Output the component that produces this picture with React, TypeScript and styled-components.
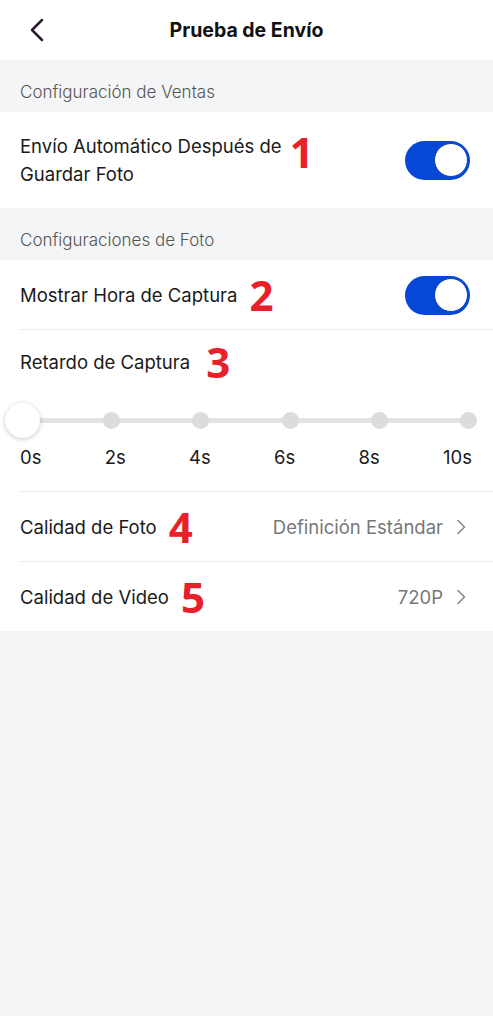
import React from "react";
import styled, { createGlobalStyle } from "styled-components";

const GlobalStyle = createGlobalStyle`
  html, body {
    margin: 0;
    padding: 0;
    background: #f4f5f7;
  }
  body {
    font-family: Inter, "Noto Sans", sans-serif;
    -webkit-font-smoothing: antialiased;
  }
`;

const Page = styled.div`
  width: 493px;
  min-height: 1016px;
  background: #f4f5f7;
  display: flex;
  flex-direction: column;
`;

const Header = styled.header`
  height: 60px;
  background: #fff;
  display: grid;
  grid-template-columns: 60px 1fr 60px;
  align-items: center;
`;

const BackButton = styled.button`
  border: none;
  background: none;
  padding: 0 0 0 30px;
  height: 60px;
  display: flex;
  align-items: center;
  cursor: pointer;
`;

const Title = styled.h1`
  margin: 0;
  text-align: center;
  font-size: 19.5px;
  font-weight: 700;
  color: #111;
`;

const SectionTitle = styled.div`
  height: 52px;
  box-sizing: border-box;
  padding: 0 20px 10px;
  display: flex;
  align-items: flex-end;
  font-size: 17px;
  font-weight: 300;
  color: #555;
`;

const Group = styled.section`
  background: #fff;
`;

const Row = styled.div<{ $h: number; $divider?: boolean; $pr?: number }>`
  height: ${(p) => p.$h}px;
  box-sizing: border-box;
  padding: 0 ${(p) => p.$pr ?? 23}px 0 20px;
  display: flex;
  align-items: center;
  position: relative;
  ${(p) =>
    p.$divider &&
    `
    &::after {
      content: "";
      position: absolute;
      left: 20px;
      right: 0;
      bottom: 0;
      height: 1px;
      background: #ececec;
    }
  `}
`;

const Label = styled.span`
  font-size: 18.5px;
  line-height: 28px;
  color: #1a1a1a;
`;

const Mark = styled.span<{ $top?: boolean; $gap?: number }>`
  font-family: "Open Sans", "Liberation Sans", sans-serif;
  font-weight: 700;
  font-size: 42px;
  line-height: 32px;
  color: #e8202a;
  margin-left: ${(p) => p.$gap ?? 12}px;
  ${(p) => p.$top && `align-self: flex-start; margin-top: 24px;`}
`;

const Spacer = styled.div`
  flex: 1;
`;

const Toggle = styled.div`
  width: 65px;
  height: 39px;
  border-radius: 20px;
  background: #0747d6;
  display: flex;
  justify-content: flex-end;
  align-items: center;
  padding: 0 2px;
  box-sizing: border-box;
`;

const Knob = styled.div`
  width: 34px;
  height: 34px;
  border-radius: 50%;
  background: #fff;
  border: 1.5px solid #0a3fc0;
  box-sizing: border-box;
`;

const DelayBlock = styled.div`
  position: relative;
  padding: 16px 0 24px;
  &::after {
    content: "";
    position: absolute;
    left: 20px;
    right: 0;
    bottom: 0;
    height: 1px;
    background: #ececec;
  }
`;

const DelayTitle = styled.div`
  padding: 0 20px;
  display: flex;
  align-items: center;
`;

const Track = styled.div`
  margin: 24px 6px 0 4px;
  height: 36px;
  display: flex;
  justify-content: space-between;
  align-items: center;
  position: relative;
  &::before {
    content: "";
    position: absolute;
    left: 18px;
    right: 18px;
    top: 16px;
    height: 5px;
    background: #e3e3e3;
    border-radius: 3px;
  }
`;

const Stop = styled.div`
  width: 36px;
  height: 36px;
  display: flex;
  justify-content: center;
  align-items: center;
  position: relative;
`;

const Dot = styled.div`
  width: 17px;
  height: 17px;
  border-radius: 50%;
  background: #dcdcdc;
`;

const Thumb = styled.div`
  width: 35px;
  height: 35px;
  border-radius: 50%;
  background: #fff;
  box-shadow: 0 1px 5px rgba(0, 0, 0, 0.22);
`;

const Ticks = styled.div`
  margin-top: 8px;
  padding: 0 21px 0 20px;
  display: flex;
  justify-content: space-between;
  font-size: 18.5px;
  line-height: 22px;
  color: #1a1a1a;
`;

const Value = styled.span`
  font-size: 18.5px;
  color: #777;
  margin-right: 13px;
`;

const Chevron = () => (
  <svg width="10" height="16" viewBox="0 0 10 16">
    <polyline
      points="2,1.5 8.5,8 2,14.5"
      fill="none"
      stroke="#888"
      strokeWidth="1.6"
      strokeLinecap="round"
      strokeLinejoin="round"
    />
  </svg>
);

const BackIcon = () => (
  <svg width="14" height="24" viewBox="0 0 14 24">
    <polyline
      points="12,2 2,12 12,22"
      fill="none"
      stroke="#2a1c2a"
      strokeWidth="2.5"
      strokeLinecap="round"
      strokeLinejoin="round"
    />
  </svg>
);

const stops = ["0s", "2s", "4s", "6s", "8s", "10s"];

export default function App() {
  return (
    <Page>
      <GlobalStyle />
      <Header>
        <BackButton aria-label="back">
          <BackIcon />
        </BackButton>
        <Title>Prueba de Envío</Title>
        <div />
      </Header>

      <SectionTitle>Configuración de Ventas</SectionTitle>
      <Group>
        <Row $h={96}>
          <Label>
            Envío Automático Después de
            <br />
            Guardar Foto
          </Label>
          <Mark $top $gap={8}>
            1
          </Mark>
          <Spacer />
          <Toggle>
            <Knob />
          </Toggle>
        </Row>
      </Group>

      <SectionTitle>Configuraciones de Foto</SectionTitle>
      <Group>
        <Row $h={70} $divider>
          <Label>Mostrar Hora de Captura</Label>
          <Mark>2</Mark>
          <Spacer />
          <Toggle>
            <Knob />
          </Toggle>
        </Row>

        <DelayBlock>
          <DelayTitle>
            <Label>Retardo de Captura</Label>
            <Mark $gap={16}>3</Mark>
          </DelayTitle>
          <Track>
            {stops.map((s, i) => (
              <Stop key={s}>{i === 0 ? <Thumb /> : <Dot />}</Stop>
            ))}
          </Track>
          <Ticks>
            {stops.map((s) => (
              <span key={s}>{s}</span>
            ))}
          </Ticks>
        </DelayBlock>

        <Row $h={70} $divider $pr={27}>
          <Label>Calidad de Foto</Label>
          <Mark>4</Mark>
          <Spacer />
          <Value>Definición Estándar</Value>
          <Chevron />
        </Row>
        <Row $h={69} $pr={27}>
          <Label>Calidad de Video</Label>
          <Mark>5</Mark>
          <Spacer />
          <Value>720P</Value>
          <Chevron />
        </Row>
      </Group>
    </Page>
  );
}
